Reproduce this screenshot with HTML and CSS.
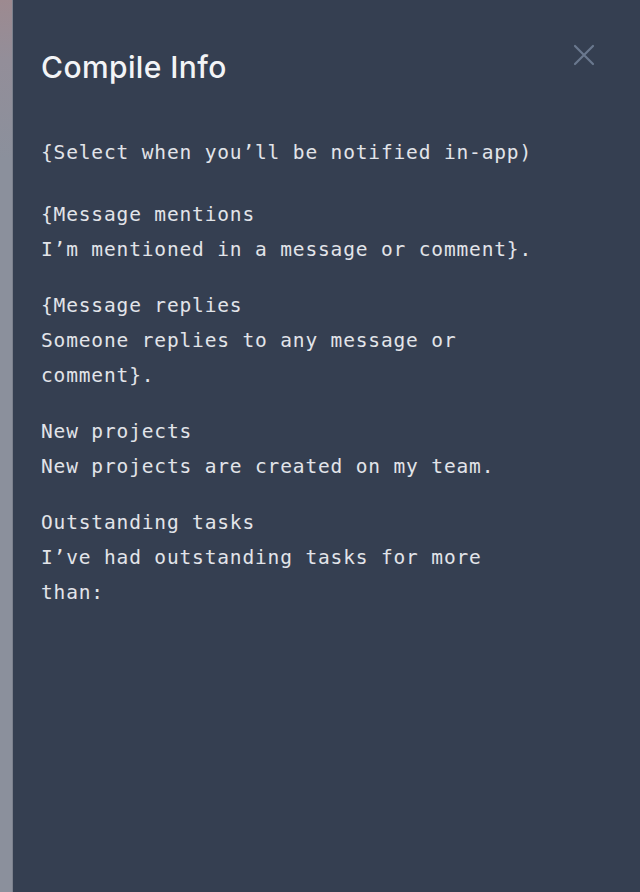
FILE: index.html
```html
<!DOCTYPE html>
<html lang="en">
<head>
<meta charset="utf-8">
<title>Compile Info</title>
<link rel="stylesheet" href="styles.css">
</head>
<body>
<div class="screen">
  <div class="backdrop"></div>
  <aside class="panel">
    <header class="panel-header">
      <h1 class="panel-title">Compile Info</h1>
      <button class="close" aria-label="Close">
        <svg width="22" height="22" viewBox="0 0 22 22" fill="none" stroke="currentColor" stroke-width="2.2" stroke-linecap="round"><path d="M2 2L20 20M20 2L2 20"/></svg>
      </button>
    </header>
    <div class="panel-body">
      <p class="info first">{Select when you’ll be notified in-app)</p>
      <p class="info"><span class="line">{Message mentions</span><span class="line">I’m mentioned in a message or comment}.</span></p>
      <p class="info"><span class="line">{Message replies</span><span class="line">Someone replies to any message or comment}.</span></p>
      <p class="info"><span class="line">New projects</span><span class="line">New projects are created on my team.</span></p>
      <p class="info"><span class="line">Outstanding tasks</span><span class="line">I’ve had outstanding tasks for more than:</span></p>
    </div>
  </aside>
</div>
</body>
</html>
```
FILE: styles.css
```css
html, body {
  margin: 0;
  padding: 0;
  height: 100%;
}
body {
  background: #374151;
}
.screen {
  display: flex;
  height: 892px;
  width: 640px;
  overflow: hidden;
}
.backdrop {
  width: 13px;
  flex: none;
  background: linear-gradient(180deg, #9d8a90 0px, #938e99 60px, #8b909c 160px, #8b909c 100%);
  border-right: 1px solid #7b808c;
  box-sizing: border-box;
}
.panel {
  flex: 1;
  background: #353f51;
  padding: 47px 43px 0 28px;
  box-sizing: border-box;
}
.panel-header {
  display: flex;
  justify-content: space-between;
  align-items: flex-start;
}
.panel-title {
  margin: 0;
  font-family: Inter, "Liberation Sans", sans-serif;
  font-weight: 500;
  font-size: 30px;
  line-height: 40px;
  color: #f3f4f6;
  letter-spacing: 0.4px;
}
.close {
  background: none;
  border: none;
  padding: 0;
  margin-top: -3px;
  margin-right: 2px;
  color: #6a788e;
  display: flex;
  cursor: pointer;
}
.panel-body {
  margin-top: 48px;
  max-width: 500px;
}
.info {
  margin: 21px 0 0 0;
  font-family: "DejaVu Sans Mono", "Liberation Mono", monospace;
  font-size: 19.5px;
  line-height: 35px;
  letter-spacing: 0.85px;
  color: #e2e4e9;
}
.info.first {
  margin-top: 0;
  margin-bottom: 27px;
}
.info.first + .info {
  margin-top: 0;
}
.line {
  display: block;
}
```
